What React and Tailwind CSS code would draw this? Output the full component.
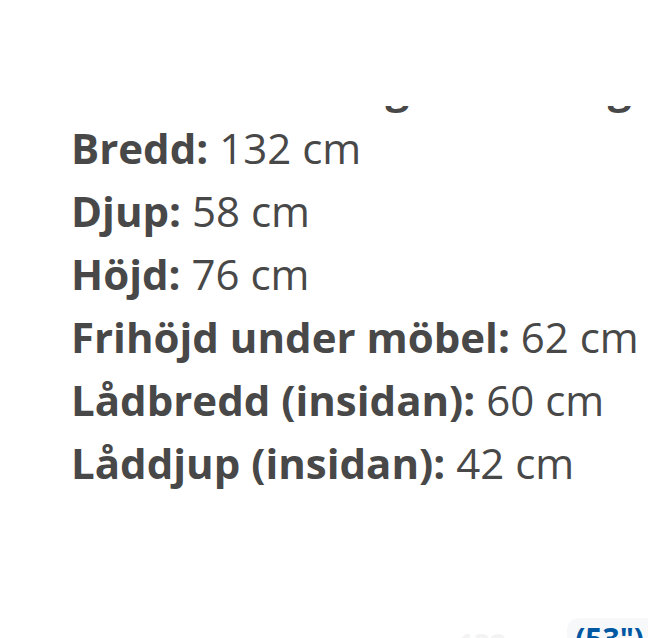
import React from "react";

const rows = [
  { label: "Bredd:", value: "132 cm" },
  { label: "Djup:", value: "58 cm" },
  { label: "Höjd:", value: "76 cm" },
  { label: "Frihöjd under möbel:", value: "62 cm" },
  { label: "Lådbredd (insidan):", value: "60 cm" },
  { label: "Låddjup (insidan):", value: "42 cm" },
];

const App = () => {
  return (
    <div
      className="w-[648px] h-[638px] overflow-hidden bg-white text-[#484848] flex flex-col"
      style={{ fontFamily: '"Open Sans", "Noto Sans", sans-serif' }}
    >
      {/* previous line, only its descenders peek out under the header */}
      <div className="mt-[106px] h-[10px] overflow-hidden flex items-end shrink-0">
        <p className="shrink-0 h-[61px] leading-[63px] text-[42px] font-bold whitespace-nowrap pl-[62px]">
          Måttbeskrivning i cm: enligt ritning
        </p>
      </div>

      <ul className="pl-[71px] shrink-0">
        {rows.map((row) => (
          <li key={row.label} className="text-[42px] leading-[63px] whitespace-nowrap">
            <span className="font-bold">{row.label}</span> {row.value}
          </li>
        ))}
      </ul>

      <div className="mt-auto flex justify-end items-start h-[20px] overflow-visible">
        <span className="text-[28px] text-[#f3f3f3] font-bold mr-3 mt-[12px] leading-none">
          132 cm
        </span>
        <div className="bg-[#f7f8fa] rounded-tl-xl pl-2 pr-1 pt-[6px] h-[40px]">
          <span className="text-[30px] font-bold text-[#0058a3] leading-none">(53")</span>
        </div>
      </div>
    </div>
  );
};

export default App;
